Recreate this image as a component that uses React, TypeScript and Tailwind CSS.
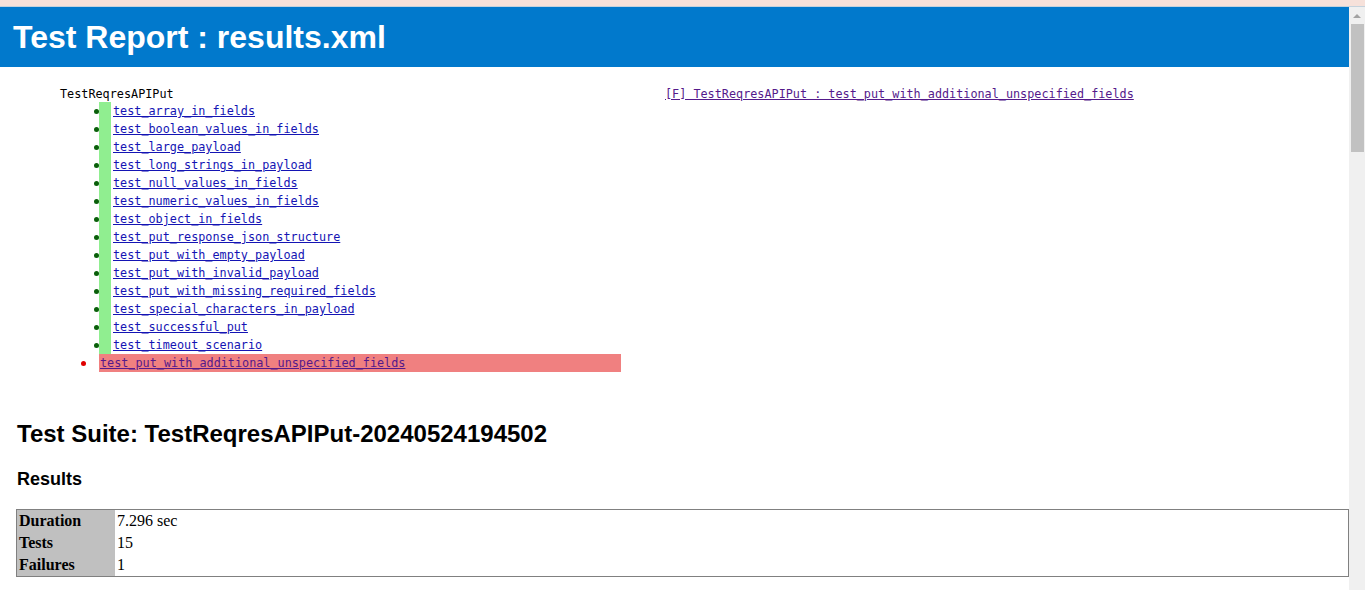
import React from 'react';

const passed = [
  'test_array_in_fields',
  'test_boolean_values_in_fields',
  'test_large_payload',
  'test_long_strings_in_payload',
  'test_null_values_in_fields',
  'test_numeric_values_in_fields',
  'test_object_in_fields',
  'test_put_response_json_structure',
  'test_put_with_empty_payload',
  'test_put_with_invalid_payload',
  'test_put_with_missing_required_fields',
  'test_special_characters_in_payload',
  'test_successful_put',
  'test_timeout_scenario',
];

const failed = 'test_put_with_additional_unspecified_fields';

const mono = "font-['DejaVu_Sans_Mono','Liberation_Mono',monospace] text-[11.8px]";

function Scrollbar() {
  return (
    <aside className="w-[16px] shrink-0 bg-[#f0f0f0] flex flex-col">
      <div className="h-[17px] flex items-center justify-center">
        <div className="w-0 h-0 border-l-[4px] border-r-[4px] border-b-[4px] border-l-transparent border-r-transparent border-b-[#a3a3a3]" />
      </div>
      <div className="ml-[2px] w-[13px] h-[128px] bg-[#c1c1c1]" />
    </aside>
  );
}

function TestTree() {
  return (
    <section className={`flex pl-[60px] pt-[19px] ${mono}`}>
      <div className="w-[605px] shrink-0">
        <div className="h-[16px] leading-[16px] text-black">TestReqresAPIPut</div>
        {passed.map((name) => (
          <div key={name} className="flex h-[18px]">
            <div className="w-[39px] flex items-center justify-end">
              <span className="w-[5px] h-[5px] rounded-full bg-[#0a5f0a]" />
            </div>
            <div className="border-l-[12px] border-[#90ee90] pl-[2px] leading-[18px]">
              <a href="#" className="text-[#1414b4] underline">
                {name}
              </a>
            </div>
          </div>
        ))}
        <div className="flex h-[18px]">
          <div className="w-[39px] flex items-center justify-end pr-[13px]">
            <span className="w-[5px] h-[5px] rounded-full bg-[#e00000]" />
          </div>
          <div className="w-[522px] bg-[#f08080] pl-[1px] leading-[18px]">
            <a href="#" className="text-[#551a8b] underline">
              {failed}
            </a>
          </div>
        </div>
      </div>
      <div className="leading-[16px]">
        <a href="#" className="text-[#551a8b] underline whitespace-pre">
          {'[F] TestReqresAPIPut : ' + failed}
        </a>
      </div>
    </section>
  );
}

function ResultsTable() {
  const rows: [string, string][] = [
    ['Duration', '7.296 sec'],
    ['Tests', '15'],
    ['Failures', '1'],
  ];
  return (
    <div className="ml-[16px] border border-[#808080] font-['Liberation_Serif','Times_New_Roman',serif] text-[16px] text-black">
      {rows.map(([label, value]) => (
        <div key={label} className="flex h-[22px] leading-[22px]">
          <div className="w-[98px] bg-[#c0c0c0] pl-[2px] font-bold">{label}</div>
          <div className="pl-[2px]">{value}</div>
        </div>
      ))}
    </div>
  );
}

export default function App() {
  return (
    <div className="w-full h-[590px] overflow-hidden flex flex-col bg-white">
      <div className="h-[7px] shrink-0 bg-[#f6e1da] border-b border-[#c5d2dc]" />
      <div className="flex flex-1 min-h-0">
        <main className="flex-1 min-w-0 overflow-hidden">
          <header className="h-[60px] bg-[#0179cc]">
            <h1 className="pl-[13px] leading-[60px] text-[32px] font-bold text-white font-['Liberation_Sans',Arial,sans-serif]">
              Test Report : results.xml
            </h1>
          </header>
          <TestTree />
          <div className="font-['Liberation_Sans',Arial,sans-serif] text-black">
            <h2 className="mt-[48px] pl-[17px] text-[24px] leading-[28px] font-bold">
              Test Suite: TestReqresAPIPut-20240524194502
            </h2>
            <h3 className="mt-[20px] pl-[17px] text-[18px] leading-[22px] font-bold">Results</h3>
          </div>
          <div className="mt-[19px]">
            <ResultsTable />
          </div>
        </main>
        <Scrollbar />
      </div>
    </div>
  );
}
